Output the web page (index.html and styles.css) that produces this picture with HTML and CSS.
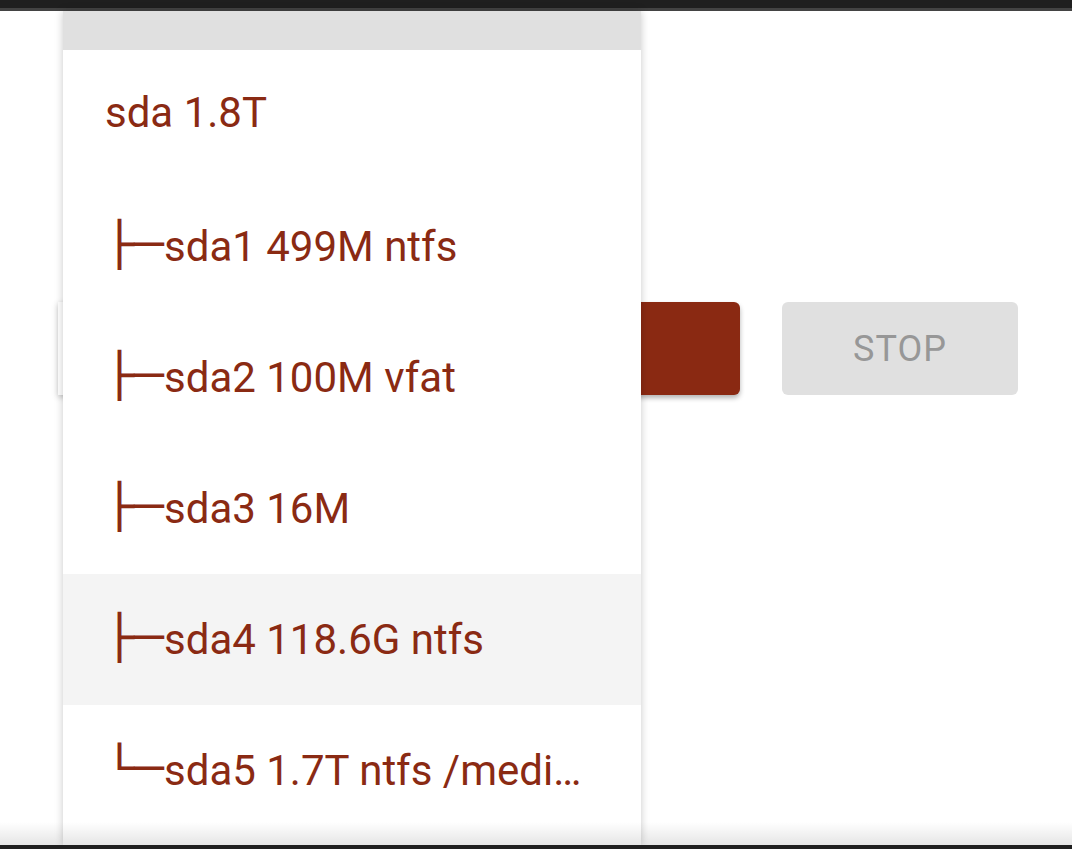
FILE: index.html
```
<!DOCTYPE html>
<html lang="en">
<head>
    <meta charset="UTF-8">
    <meta name="viewport" content="width=device-width, initial-scale=1.0">
    <title>Disks</title>
    <link rel="stylesheet" href="styles.css">
</head>
<body>
    <div class="status-bar"></div>
    <div class="content">
        <div class="controls">
            <div class="disk-select"></div>
            <button class="btn btn-start">START</button>
            <button class="btn btn-stop" disabled>STOP</button>
        </div>
    </div>

    <!-- open dropdown of the disk select -->
    <div class="menu">
        <div class="menu-header"></div>
        <ul class="menu-list">
            <li class="menu-item first">sda 1.8T</li>
            <li class="menu-item"><span class="tree">├─</span>sda1 499M ntfs</li>
            <li class="menu-item"><span class="tree">├─</span>sda2 100M vfat</li>
            <li class="menu-item"><span class="tree">├─</span>sda3 16M</li>
            <li class="menu-item hover"><span class="tree">├─</span>sda4 118.6G ntfs</li>
            <li class="menu-item"><span class="tree">└─</span>sda5 1.7T ntfs /media/data</li>
        </ul>
    </div>

    <div class="bottom-fade"></div>
    <div class="nav-bar"></div>
</body>
</html>
```

FILE: styles.css
```
body {
    font-family: Roboto, "Noto Sans", Arial, sans-serif;
    margin: 0;
    padding: 0;
    background-color: #fff;
    height: 849px;
    overflow: hidden;
}
.status-bar {
    height: 8px;
    background: #1f1f1f;
    border-bottom: 3px solid #434343;
}
.content {
    padding: 291px 0 0 58px;
}
.controls {
    display: flex;
    align-items: center;
    gap: 42px;
}
.disk-select {
    width: 320px;
    height: 93px;
    background: #fff;
    box-shadow: 0 2px 6px rgba(0, 0, 0, 0.25);
}
.btn {
    width: 236px;
    height: 93px;
    border: none;
    border-radius: 6px;
    font-family: Roboto, sans-serif;
    font-size: 36px;
    font-weight: 400;
    letter-spacing: 1px;
}
.btn-start {
    width: 320px;
    background-color: #8a2912;
    color: #fff;
    box-shadow: 0 3px 5px rgba(0, 0, 0, 0.3);
}
.btn-stop {
    background-color: #e0e0e0;
    color: #979797;
}
.menu {
    position: absolute;
    left: 63px;
    top: 11px;
    width: 578px;
    height: 834px;
    background: #fff;
    overflow: hidden;
    box-shadow: 0 0 8px rgba(0, 0, 0, 0.22);
}
.menu-header {
    height: 39px;
    background: #e0e0e0;
}
.menu-list {
    list-style: none;
    margin: 0;
    padding: 0;
}
.menu-item {
    height: 131px;
    line-height: 131px;
    padding: 0 42px;
    font-size: 42px;
    color: #8a2a13;
    white-space: nowrap;
    overflow: hidden;
    text-overflow: ellipsis;
}
.menu-item.first {
    line-height: 126px;
}
.menu-item.hover {
    background-color: #f4f4f4;
}
.tree {
    display: inline-block;
    font-family: "DejaVu Sans", sans-serif;
    font-size: 49px;
    line-height: 0;
    transform: scaleY(0.88);
}
.bottom-fade {
    position: absolute;
    left: 0;
    right: 0;
    top: 822px;
    height: 23px;
    background: linear-gradient(rgba(0, 0, 0, 0), rgba(0, 0, 0, 0.1));
}
.nav-bar {
    position: absolute;
    left: 0;
    right: 0;
    top: 845px;
    height: 4px;
    background: #1f1f1f;
}
```
